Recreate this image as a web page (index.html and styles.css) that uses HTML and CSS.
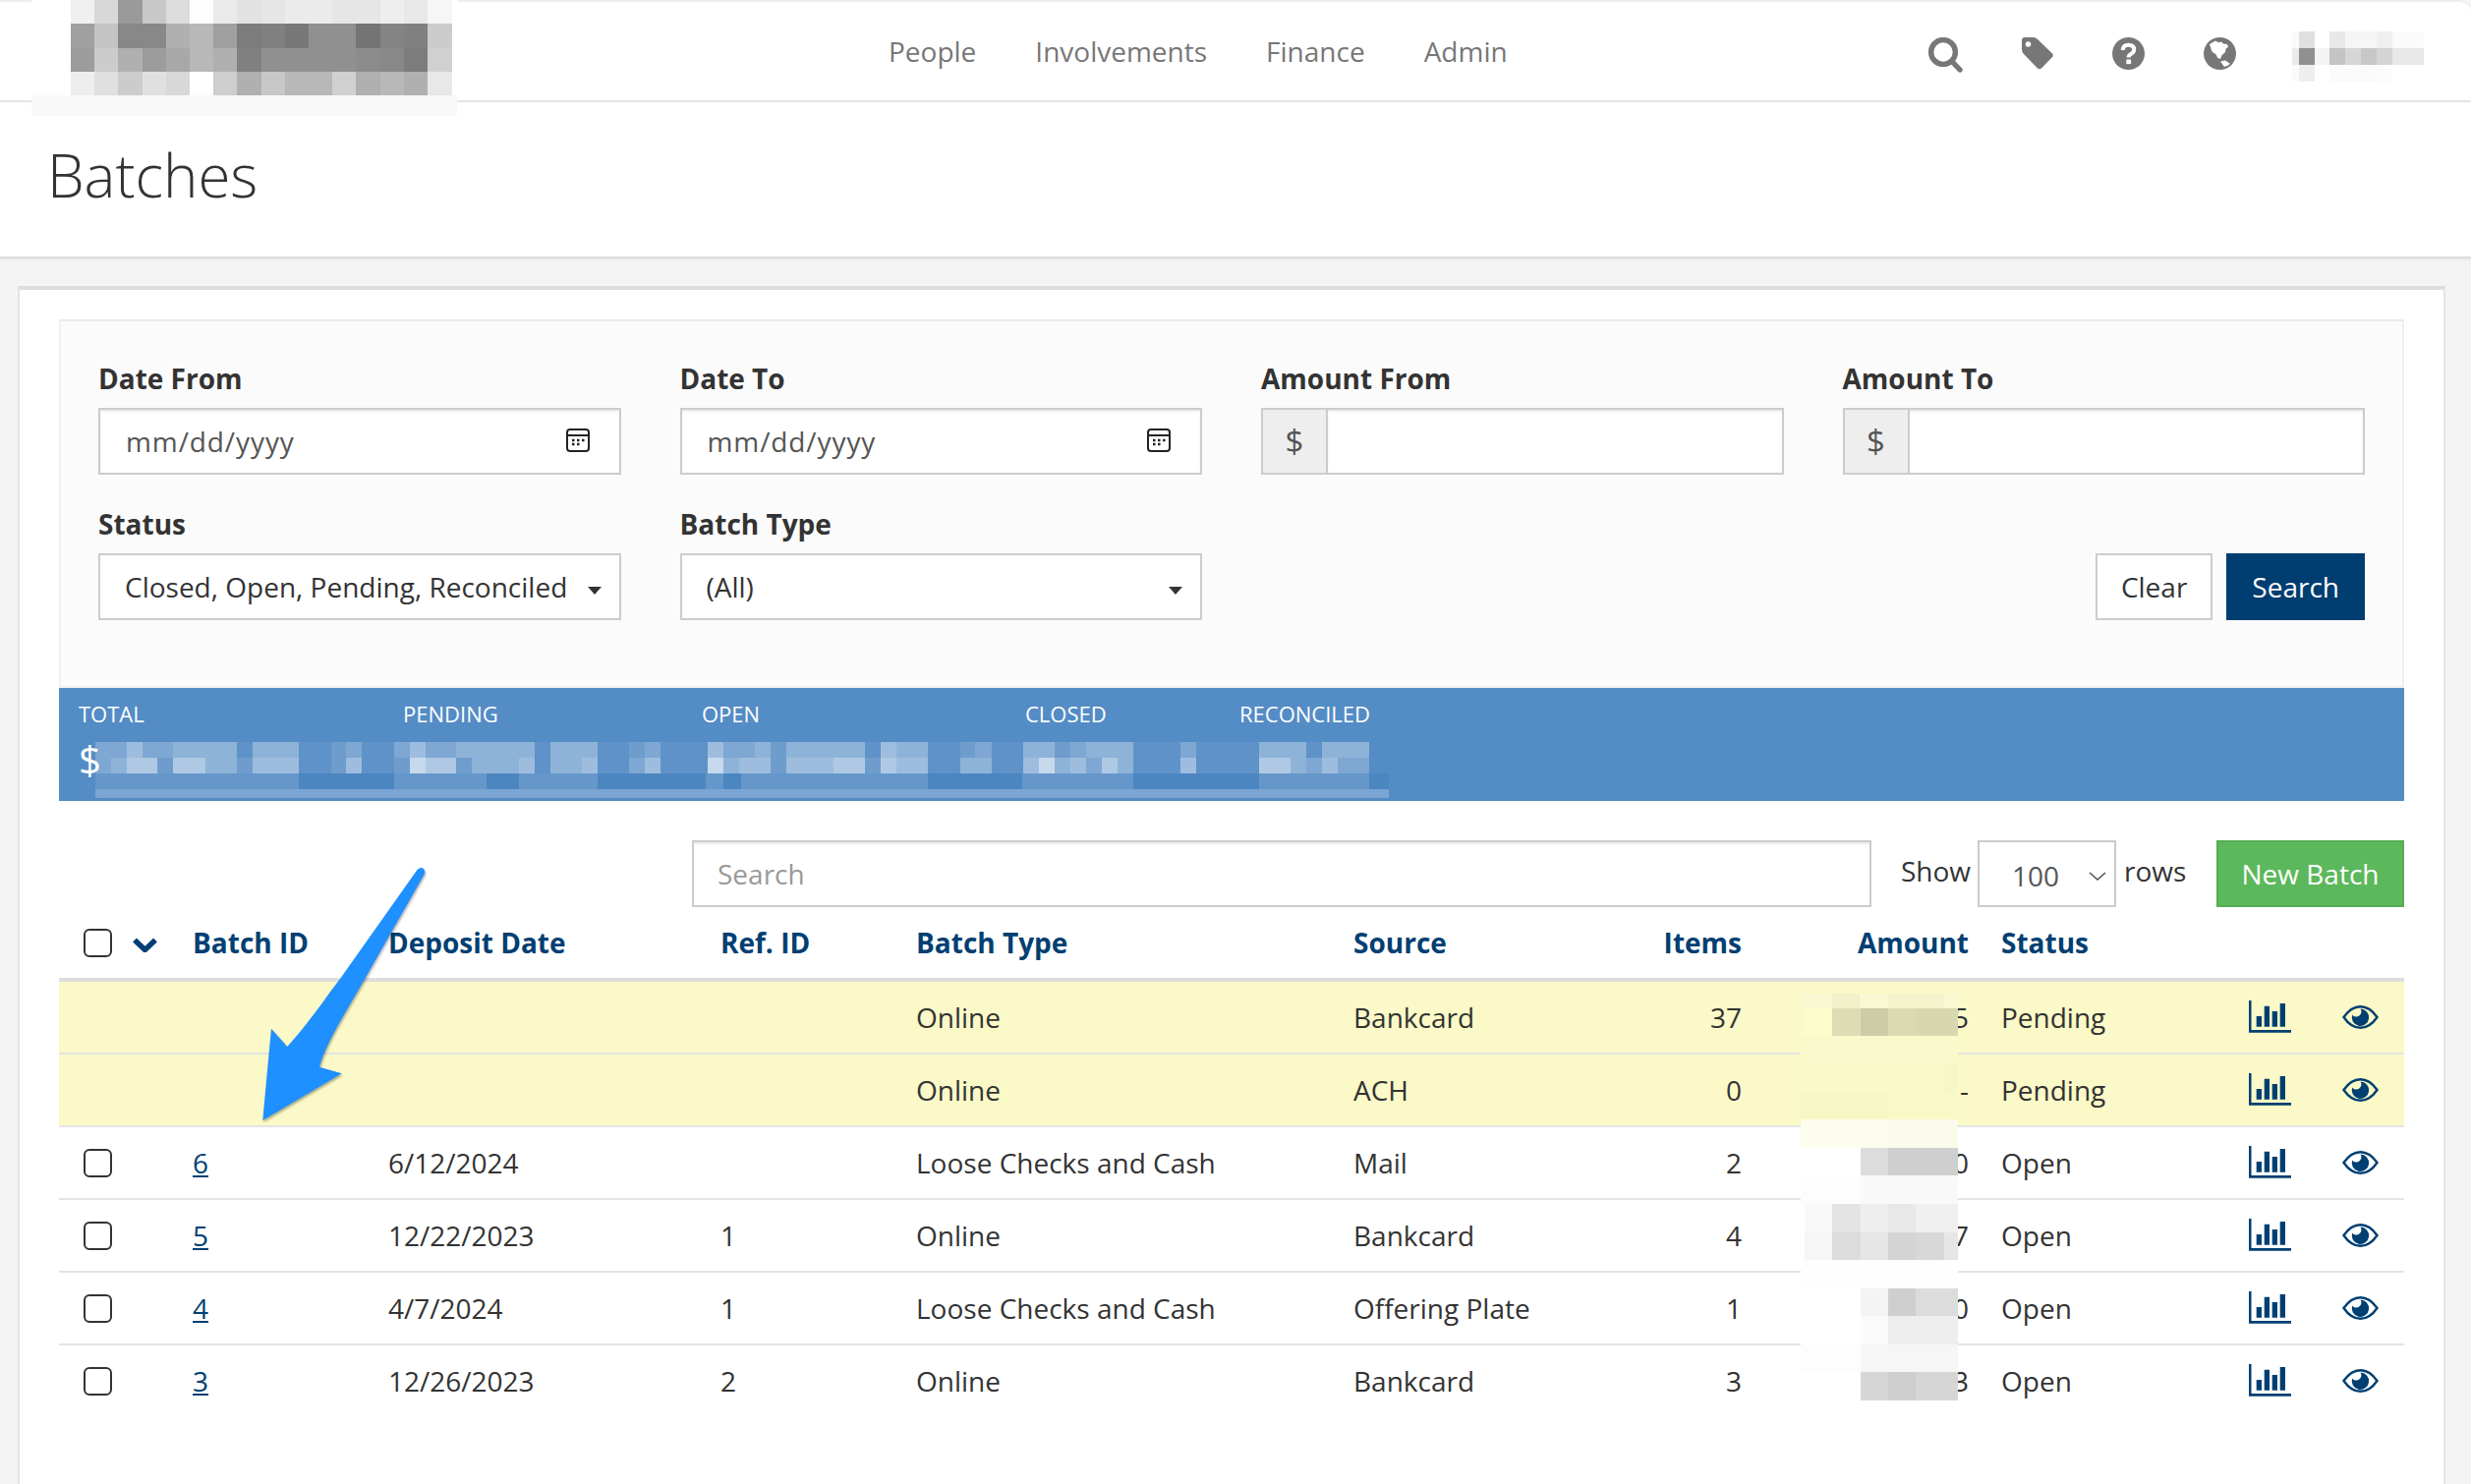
FILE: index.html
```html
<!DOCTYPE html>
<html lang="en">
<head>
<meta charset="utf-8">
<title>Batches</title>
<link rel="stylesheet" href="styles.css">
</head>
<body>
<svg class="arrow" viewBox="0 0 240 300" aria-hidden="true"><path d="M184.5 25Q186 23 189 23Q193 24 192 29L131.7 135C112 170 92 200 85 225.7L107.7 232.3L27.3 280L36 186.7L52.3 205C75 180 95 150 106.7 135Z"/></svg>

<header class="topbar">
  <svg class="logo-mosaic" viewBox="32 0 433 118" shape-rendering="crispEdges" aria-hidden="true">
    <rect x="32" y="0" width="433" height="118" fill="#fff"/>
    <rect x="32" y="97" width="433" height="21" fill="#f9f9f9"/>
    <g fill="#f0f0f0"><rect x="72" y="0" width="24.2" height="24"/></g>
    <rect x="96" y="0" width="24" height="24" fill="#d8d8d8"/><rect x="120" y="0" width="25" height="24" fill="#9a9a9a"/><rect x="145" y="0" width="24" height="24" fill="#c8c8c8"/><rect x="169" y="0" width="24" height="24" fill="#dcdcdc"/><rect x="193" y="0" width="24" height="24" fill="#fdfdfd"/><rect x="217" y="0" width="24" height="24" fill="#eaeaea"/><rect x="241" y="0" width="25" height="24" fill="#e2e2e2"/><rect x="266" y="0" width="24" height="24" fill="#e6e6e6"/><rect x="290" y="0" width="48" height="24" fill="#ebebeb"/><rect x="338" y="0" width="49" height="24" fill="#e6e6e6"/><rect x="387" y="0" width="24" height="24" fill="#eeeeee"/><rect x="411" y="0" width="24" height="24" fill="#e8e8e8"/><rect x="435" y="0" width="25" height="24" fill="#f6f6f6"/>
    <rect x="72" y="24" width="24" height="25" fill="#a0a0a0"/><rect x="96" y="24" width="24" height="25" fill="#c4c4c4"/><rect x="120" y="24" width="49" height="25" fill="#888"/><rect x="169" y="24" width="24" height="25" fill="#b0b0b0"/><rect x="193" y="24" width="24" height="25" fill="#b8b8b8"/><rect x="217" y="24" width="24" height="25" fill="#a0a0a0"/><rect x="241" y="24" width="25" height="25" fill="#7c7c7c"/><rect x="266" y="24" width="24" height="25" fill="#808080"/><rect x="290" y="24" width="24" height="25" fill="#787878"/><rect x="314" y="24" width="48" height="25" fill="#909090"/><rect x="362" y="24" width="25" height="25" fill="#747474"/><rect x="387" y="24" width="24" height="25" fill="#848484"/><rect x="411" y="24" width="24" height="25" fill="#808080"/><rect x="435" y="24" width="25" height="25" fill="#cccccc"/>
    <rect x="72" y="49" width="24" height="24" fill="#9c9c9c"/><rect x="96" y="49" width="24" height="24" fill="#cccccc"/><rect x="120" y="49" width="25" height="24" fill="#b0b0b0"/><rect x="145" y="49" width="24" height="24" fill="#9c9c9c"/><rect x="169" y="49" width="24" height="24" fill="#a8a8a8"/><rect x="193" y="49" width="24" height="24" fill="#b8b8b8"/><rect x="217" y="49" width="24" height="24" fill="#b0b0b0"/><rect x="241" y="49" width="25" height="24" fill="#808080"/><rect x="266" y="49" width="96" height="24" fill="#909090"/><rect x="362" y="49" width="25" height="24" fill="#8c8c8c"/><rect x="387" y="49" width="24" height="24" fill="#888"/><rect x="411" y="49" width="24" height="24" fill="#7c7c7c"/><rect x="435" y="49" width="25" height="24" fill="#d0d0d0"/>
    <rect x="72" y="73" width="24" height="24" fill="#eeeeee"/><rect x="96" y="73" width="24" height="24" fill="#e0e0e0"/><rect x="120" y="73" width="25" height="24" fill="#cccccc"/><rect x="145" y="73" width="24" height="24" fill="#e0e0e0"/><rect x="169" y="73" width="24" height="24" fill="#d8d8d8"/><rect x="217" y="73" width="24" height="24" fill="#cecece"/><rect x="241" y="73" width="25" height="24" fill="#b0b0b0"/><rect x="266" y="73" width="24" height="24" fill="#c8c8c8"/><rect x="290" y="73" width="48" height="24" fill="#b8b8b8"/><rect x="338" y="73" width="24" height="24" fill="#d0d0d0"/><rect x="362" y="73" width="25" height="24" fill="#b0b0b0"/><rect x="387" y="73" width="24" height="24" fill="#b8b8b8"/><rect x="411" y="73" width="24" height="24" fill="#b0b0b0"/><rect x="435" y="73" width="25" height="24" fill="#e8e8e8"/>
  </svg>
  <nav class="mainnav">
    <a href="#">People</a>
    <a href="#">Involvements</a>
    <a href="#">Finance</a>
    <a href="#">Admin</a>
  </nav>
  <div class="tools">
    <svg class="ico ico-search" viewBox="0 0 35 36" aria-hidden="true"><circle cx="15" cy="15" r="12.4"/><path d="M24 24.5L32 33"/></svg>
    <svg class="ico ico-tag" viewBox="0 0 32 33" aria-hidden="true"><path fill-rule="evenodd" d="M3 0H12Q14 0 16 2L31 16.5Q32.5 18 31 20L20 31.5Q18 33 16 31.5L2 17Q0 15 0 12V3Q0 0 3 0ZM6.5 4.2a2.8 2.8 0 1 0 .01 0Z"/></svg>
    <svg class="ico ico-help" viewBox="0 0 33 33" aria-hidden="true"><circle cx="16.5" cy="16.5" r="16.5"/><path class="mark" d="M10.8 13Q11 7.8 16.5 7.8Q22.2 7.8 22.2 12.6Q22.2 15.2 19 17Q16.6 18.2 16.6 20.5"/><rect class="dot" x="14.3" y="22.5" width="4.8" height="4.6"/></svg>
    <svg class="ico ico-globe" viewBox="0 0 33 33" aria-hidden="true"><circle cx="16.5" cy="16.5" r="16.5"/><path class="land" d="M6 7L12 3.6L15 5.2L18 4.4L20 6.5L24 7L25 10L22.6 11.6L22 15L18.4 18.6L17 22L14.4 21L12.6 17.6L8.5 14.5ZM17 24.4L22 23.6L26.6 26.4L26 28L21 30Z"/></svg>
    <svg class="user-mosaic" viewBox="0 0 134 51" shape-rendering="crispEdges" aria-hidden="true">
      <rect x="0" y="0" width="7" height="17" fill="#fafafa"/><rect x="7" y="0" width="16" height="17" fill="#e0e0e0"/><rect x="38" y="0" width="16" height="17" fill="#e8e8e8"/><rect x="54" y="0" width="32" height="17" fill="#f6f6f6"/><rect x="86" y="0" width="16" height="17" fill="#f0f0f0"/><rect x="102" y="0" width="32" height="17" fill="#fbfbfb"/>
      <rect x="0" y="17" width="7" height="17" fill="#eaeaea"/><rect x="7" y="17" width="16" height="17" fill="#909090"/><rect x="23" y="17" width="15" height="17" fill="#f4f4f4"/><rect x="38" y="17" width="16" height="17" fill="#c4c4c4"/><rect x="54" y="17" width="16" height="17" fill="#d6d6d6"/><rect x="70" y="17" width="16" height="17" fill="#c8c8c8"/><rect x="86" y="17" width="16" height="17" fill="#d4d4d4"/><rect x="102" y="17" width="32" height="17" fill="#e8e8e8"/>
      <rect x="0" y="34" width="7" height="17" fill="#fafafa"/><rect x="7" y="34" width="16" height="17" fill="#eeeeee"/><rect x="38" y="34" width="48" height="17" fill="#fbfbfb"/><rect x="86" y="34" width="16" height="17" fill="#fcfcfc"/>
    </svg>
  </div>
</header>

<section class="titlebar">
  <h1>Batches</h1>
</section>

<main class="workspace">
  <div class="card">
    <form class="filters">
      <div class="field">
        <label>Date From</label>
        <div class="control date"><span>mm/dd/yyyy</span>
          <svg class="cal" viewBox="0 0 24 24" aria-hidden="true"><rect x="1" y="1" width="22" height="22" rx="3"/><path d="M1 7H23"/><path class="pips" d="M6 12h2.5M11 12h2.5M16 12h2.5M6 16h2.5M11 16h2.5"/></svg>
        </div>
      </div>
      <div class="field">
        <label>Date To</label>
        <div class="control date"><span>mm/dd/yyyy</span>
          <svg class="cal" viewBox="0 0 24 24" aria-hidden="true"><rect x="1" y="1" width="22" height="22" rx="3"/><path d="M1 7H23"/><path class="pips" d="M6 12h2.5M11 12h2.5M16 12h2.5M6 16h2.5M11 16h2.5"/></svg>
        </div>
      </div>
      <div class="field">
        <label>Amount From</label>
        <div class="control money"><span class="addon">$</span><span class="blank"></span></div>
      </div>
      <div class="field">
        <label>Amount To</label>
        <div class="control money"><span class="addon">$</span><span class="blank"></span></div>
      </div>
      <div class="field">
        <label>Status</label>
        <div class="control pick"><span>Closed, Open, Pending, Reconciled</span><i class="caret"></i></div>
      </div>
      <div class="field">
        <label>Batch Type</label>
        <div class="control pick"><span>(All)</span><i class="caret"></i></div>
      </div>
      <div class="actions">
        <button type="button" class="btn btn-plain">Clear</button>
        <button type="button" class="btn btn-navy">Search</button>
      </div>
    </form>

    <section class="stats">
      <div class="stat"><span class="stat-label">TOTAL</span><span class="stat-value">$</span></div>
      <div class="stat"><span class="stat-label">PENDING</span></div>
      <div class="stat"><span class="stat-label">OPEN</span></div>
      <div class="stat"><span class="stat-label">CLOSED</span></div>
      <div class="stat"><span class="stat-label">RECONCILED</span></div>
      <svg class="stats-mosaic" viewBox="0 0 1320 62" shape-rendering="crispEdges" aria-hidden="true">
        <g transform="translate(-57.2 0) scale(.893 1)">
          <rect class="w0" x="64" y="3" width="1451" height="32"/>
          <g class="ra">
            <rect class="w2" x="64" y="3" width="36" height="16"/><rect class="w4" x="100" y="3" width="18" height="16"/><rect class="w2" x="118" y="3" width="35" height="16"/><rect class="w3" x="153" y="3" width="36" height="16"/><rect class="w3" x="189" y="3" width="36" height="16"/><rect class="w3" x="243" y="3" width="53" height="16"/><rect class="w1" x="333" y="3" width="17" height="16"/><rect class="w2" x="350" y="3" width="18" height="16"/><rect class="w2" x="404" y="3" width="18" height="16"/><rect class="w4" x="422" y="3" width="18" height="16"/><rect class="w2" x="440" y="3" width="35" height="16"/><rect class="w3" x="475" y="3" width="90" height="16"/><rect class="w3" x="583" y="3" width="53" height="16"/><rect class="w1" x="672" y="3" width="18" height="16"/><rect class="w2" x="690" y="3" width="18" height="16"/><rect class="w4" x="762" y="3" width="18" height="16"/><rect class="w2" x="780" y="3" width="35" height="16"/><rect class="w3" x="815" y="3" width="18" height="16"/><rect class="w1" x="833" y="3" width="18" height="16"/><rect class="w3" x="851" y="3" width="90" height="16"/><rect class="w4" x="959" y="3" width="18" height="16"/><rect class="w3" x="977" y="3" width="36" height="16"/><rect class="w1" x="1049" y="3" width="17" height="16"/><rect class="w2" x="1066" y="3" width="19" height="16"/><rect class="w3" x="1121" y="3" width="36" height="16"/><rect class="w1" x="1157" y="3" width="18" height="16"/><rect class="w2" x="1175" y="3" width="18" height="16"/><rect class="w3" x="1193" y="3" width="54" height="16"/><rect class="w2" x="1300" y="3" width="18" height="16"/><rect class="w3" x="1390" y="3" width="54" height="16"/><rect class="w3" x="1462" y="3" width="53" height="16"/>
          </g>
          <g class="rb">
            <rect class="w2" x="64" y="19" width="18" height="16"/><rect class="w3" x="82" y="19" width="18" height="16"/><rect class="w5" x="100" y="19" width="35" height="16"/><rect class="w1" x="135" y="19" width="18" height="16"/><rect class="w5" x="153" y="19" width="36" height="16"/><rect class="w3" x="189" y="19" width="36" height="16"/><rect class="w1" x="225" y="19" width="18" height="16"/><rect class="w4" x="243" y="19" width="53" height="16"/><rect class="w1" x="333" y="19" width="17" height="16"/><rect class="w4" x="350" y="19" width="18" height="16"/><rect class="w1" x="404" y="19" width="18" height="16"/><rect class="w6" x="422" y="19" width="18" height="16"/><rect class="w5" x="440" y="19" width="35" height="16"/><rect class="w1" x="475" y="19" width="18" height="16"/><rect class="w3" x="493" y="19" width="54" height="16"/><rect class="w4" x="547" y="19" width="18" height="16"/><rect class="w3" x="583" y="19" width="35" height="16"/><rect class="w4" x="618" y="19" width="18" height="16"/><rect class="w2" x="672" y="19" width="18" height="16"/><rect class="w4" x="690" y="19" width="18" height="16"/><rect class="w6" x="762" y="19" width="18" height="16"/><rect class="w3" x="780" y="19" width="17" height="16"/><rect class="w4" x="797" y="19" width="36" height="16"/><rect class="w1" x="833" y="19" width="18" height="16"/><rect class="w4" x="851" y="19" width="54" height="16"/><rect class="w5" x="905" y="19" width="36" height="16"/><rect class="w1" x="941" y="19" width="18" height="16"/><rect class="w5" x="959" y="19" width="18" height="16"/><rect class="w4" x="977" y="19" width="36" height="16"/><rect class="w3" x="1049" y="19" width="36" height="16"/><rect class="w4" x="1121" y="19" width="18" height="16"/><rect class="w6" x="1139" y="19" width="18" height="16"/><rect class="w3" x="1157" y="19" width="18" height="16"/><rect class="w4" x="1175" y="19" width="18" height="16"/><rect class="w2" x="1193" y="19" width="18" height="16"/><rect class="w5" x="1211" y="19" width="18" height="16"/><rect class="w3" x="1229" y="19" width="18" height="16"/><rect class="w4" x="1300" y="19" width="18" height="16"/><rect class="w5" x="1390" y="19" width="36" height="16"/><rect class="w3" x="1426" y="19" width="18" height="16"/><rect class="w2" x="1444" y="19" width="18" height="16"/><rect class="w4" x="1462" y="19" width="18" height="16"/><rect class="w2" x="1480" y="19" width="35" height="16"/>
          </g>
          <g class="rc">
            <rect class="w1" x="64" y="35" width="232" height="16"/><rect class="dk" x="296" y="35" width="108" height="16"/><rect class="w1" x="404" y="35" width="106" height="16"/><rect class="dk" x="510" y="35" width="37" height="16"/><rect class="w1" x="547" y="35" width="89" height="16"/><rect class="dk" x="636" y="35" width="124" height="16"/><rect class="w1" x="760" y="35" width="20" height="16"/><rect class="dk" x="780" y="35" width="20" height="16"/><rect class="w1" x="800" y="35" width="213" height="16"/><rect class="dk" x="1013" y="35" width="107" height="16"/><rect class="w1" x="1120" y="35" width="127" height="16"/><rect class="dk" x="1247" y="35" width="143" height="16"/><rect class="w1" x="1390" y="35" width="125" height="16"/><rect class="dk" x="1515" y="35" width="23" height="16"/>
          </g>
          <rect class="strip" x="64" y="51" width="1474" height="9"/>
        </g>
      </svg>
    </section>

    <div class="toolbar">
      <input class="search" type="text" placeholder="Search">
      <span class="show-label">Show</span>
      <div class="rowpick"><span>100</span><svg viewBox="0 0 18 9" aria-hidden="true"><path d="M1 1L9 8L17 1"/></svg></div>
      <span class="rows-label">rows</span>
      <button type="button" class="btn btn-green">New Batch</button>
    </div>

    <div class="table-wrap">
      <table class="batches">
        <colgroup>
          <col class="c-sel"><col class="c-id"><col class="c-date"><col class="c-ref"><col class="c-type"><col class="c-src"><col class="c-items"><col class="c-amt"><col class="c-status"><col class="c-chart"><col class="c-eye">
        </colgroup>
        <thead>
          <tr>
            <th><div class="sel"><i class="check"></i><svg class="chev" viewBox="0 0 25 15" aria-hidden="true"><path d="M2 2.5L12.5 12.5L23 2.5"/></svg></div></th>
            <th>Batch ID</th>
            <th>Deposit Date</th>
            <th>Ref. ID</th>
            <th>Batch Type</th>
            <th>Source</th>
            <th class="num">Items</th>
            <th class="num">Amount</th>
            <th class="st">Status</th>
            <th></th>
            <th></th>
          </tr>
        </thead>
        <tbody>
          <tr class="pending">
            <td></td><td></td><td></td><td></td><td>Online</td><td>Bankcard</td><td class="num">37</td><td class="num">5</td><td class="st">Pending</td>
            <td><svg class="chart" viewBox="0 0 43 33" aria-hidden="true"><path d="M0 0h2.5v30H43v2.7H0zM7.7 16h5.3v10.7H7.7zM15.7 5.7H21v21h-5.3zM23.7 11H29v15.7h-5.3zM31.7 3H37v23.7h-5.3z"/></svg></td>
            <td><svg class="eye" viewBox="0 0 37 24" aria-hidden="true"><path class="lid" d="M1.5 12C7 4 12.5 1.2 18.5 1.2S30 4 35.5 12C30 20 24.5 22.8 18.5 22.8S7 20 1.5 12Z"/><path class="iris" d="M18.5 3.5A8.7 8.7 0 1 1 10.2 9.4A5 5 0 0 0 18.5 3.5Z"/></svg></td>
          </tr>
          <tr class="pending">
            <td></td><td></td><td></td><td></td><td>Online</td><td>ACH</td><td class="num">0</td><td class="num">-</td><td class="st">Pending</td>
            <td><svg class="chart" viewBox="0 0 43 33" aria-hidden="true"><path d="M0 0h2.5v30H43v2.7H0zM7.7 16h5.3v10.7H7.7zM15.7 5.7H21v21h-5.3zM23.7 11H29v15.7h-5.3zM31.7 3H37v23.7h-5.3z"/></svg></td>
            <td><svg class="eye" viewBox="0 0 37 24" aria-hidden="true"><path class="lid" d="M1.5 12C7 4 12.5 1.2 18.5 1.2S30 4 35.5 12C30 20 24.5 22.8 18.5 22.8S7 20 1.5 12Z"/><path class="iris" d="M18.5 3.5A8.7 8.7 0 1 1 10.2 9.4A5 5 0 0 0 18.5 3.5Z"/></svg></td>
          </tr>
          <tr>
            <td><div class="sel"><i class="check"></i></div></td><td><a href="#">6</a></td><td>6/12/2024</td><td></td><td>Loose Checks and Cash</td><td>Mail</td><td class="num">2</td><td class="num">0</td><td class="st">Open</td>
            <td><svg class="chart" viewBox="0 0 43 33" aria-hidden="true"><path d="M0 0h2.5v30H43v2.7H0zM7.7 16h5.3v10.7H7.7zM15.7 5.7H21v21h-5.3zM23.7 11H29v15.7h-5.3zM31.7 3H37v23.7h-5.3z"/></svg></td>
            <td><svg class="eye" viewBox="0 0 37 24" aria-hidden="true"><path class="lid" d="M1.5 12C7 4 12.5 1.2 18.5 1.2S30 4 35.5 12C30 20 24.5 22.8 18.5 22.8S7 20 1.5 12Z"/><path class="iris" d="M18.5 3.5A8.7 8.7 0 1 1 10.2 9.4A5 5 0 0 0 18.5 3.5Z"/></svg></td>
          </tr>
          <tr>
            <td><div class="sel"><i class="check"></i></div></td><td><a href="#">5</a></td><td>12/22/2023</td><td>1</td><td>Online</td><td>Bankcard</td><td class="num">4</td><td class="num">7</td><td class="st">Open</td>
            <td><svg class="chart" viewBox="0 0 43 33" aria-hidden="true"><path d="M0 0h2.5v30H43v2.7H0zM7.7 16h5.3v10.7H7.7zM15.7 5.7H21v21h-5.3zM23.7 11H29v15.7h-5.3zM31.7 3H37v23.7h-5.3z"/></svg></td>
            <td><svg class="eye" viewBox="0 0 37 24" aria-hidden="true"><path class="lid" d="M1.5 12C7 4 12.5 1.2 18.5 1.2S30 4 35.5 12C30 20 24.5 22.8 18.5 22.8S7 20 1.5 12Z"/><path class="iris" d="M18.5 3.5A8.7 8.7 0 1 1 10.2 9.4A5 5 0 0 0 18.5 3.5Z"/></svg></td>
          </tr>
          <tr>
            <td><div class="sel"><i class="check"></i></div></td><td><a href="#">4</a></td><td>4/7/2024</td><td>1</td><td>Loose Checks and Cash</td><td>Offering Plate</td><td class="num">1</td><td class="num">0</td><td class="st">Open</td>
            <td><svg class="chart" viewBox="0 0 43 33" aria-hidden="true"><path d="M0 0h2.5v30H43v2.7H0zM7.7 16h5.3v10.7H7.7zM15.7 5.7H21v21h-5.3zM23.7 11H29v15.7h-5.3zM31.7 3H37v23.7h-5.3z"/></svg></td>
            <td><svg class="eye" viewBox="0 0 37 24" aria-hidden="true"><path class="lid" d="M1.5 12C7 4 12.5 1.2 18.5 1.2S30 4 35.5 12C30 20 24.5 22.8 18.5 22.8S7 20 1.5 12Z"/><path class="iris" d="M18.5 3.5A8.7 8.7 0 1 1 10.2 9.4A5 5 0 0 0 18.5 3.5Z"/></svg></td>
          </tr>
          <tr>
            <td><div class="sel"><i class="check"></i></div></td><td><a href="#">3</a></td><td>12/26/2023</td><td>2</td><td>Online</td><td>Bankcard</td><td class="num">3</td><td class="num">3</td><td class="st">Open</td>
            <td><svg class="chart" viewBox="0 0 43 33" aria-hidden="true"><path d="M0 0h2.5v30H43v2.7H0zM7.7 16h5.3v10.7H7.7zM15.7 5.7H21v21h-5.3zM23.7 11H29v15.7h-5.3zM31.7 3H37v23.7h-5.3z"/></svg></td>
            <td><svg class="eye" viewBox="0 0 37 24" aria-hidden="true"><path class="lid" d="M1.5 12C7 4 12.5 1.2 18.5 1.2S30 4 35.5 12C30 20 24.5 22.8 18.5 22.8S7 20 1.5 12Z"/><path class="iris" d="M18.5 3.5A8.7 8.7 0 1 1 10.2 9.4A5 5 0 0 0 18.5 3.5Z"/></svg></td>
          </tr>
        </tbody>
      </table>
      <svg class="amount-mosaic" viewBox="1832 1011 160 414" shape-rendering="crispEdges" aria-hidden="true">
        <rect x="1832" y="1011" width="160" height="15" fill="#f8f8d2"/><rect x="1864" y="1011" width="28" height="15" fill="#f0f1c8"/><rect x="1921" y="1011" width="57" height="15" fill="#f4f4cc"/>
        <rect x="1832" y="1026" width="160" height="28" fill="#fbfac9"/><rect x="1836" y="1026" width="28" height="28" fill="#fdfdcc"/><rect x="1864" y="1026" width="29" height="28" fill="#dcddb4"/><rect x="1893" y="1026" width="28" height="28" fill="#cccca8"/><rect x="1921" y="1026" width="28" height="28" fill="#dadbb2"/><rect x="1949" y="1026" width="43" height="28" fill="#d7d8b0"/>
        <rect x="1832" y="1054" width="160" height="28" fill="#f9f9cb"/>
        <rect x="1832" y="1082" width="160" height="29" fill="#fafac8"/><rect x="1978" y="1082" width="14" height="29" fill="#f6f6c6"/>
        <rect x="1832" y="1111" width="89" height="28" fill="#f7f7c6"/><rect x="1921" y="1111" width="71" height="28" fill="#f9f9c8"/>
        <rect x="1832" y="1139" width="160" height="29" fill="#fdfdee"/><rect x="1921" y="1139" width="71" height="29" fill="#fbfbec"/>
        <rect x="1832" y="1168" width="160" height="28" fill="#fff"/><rect x="1893" y="1168" width="28" height="28" fill="#dcdcdc"/><rect x="1921" y="1168" width="71" height="28" fill="#cfcfcf"/>
        <rect x="1832" y="1196" width="160" height="29" fill="#fdfdfd"/><rect x="1893" y="1196" width="99" height="29" fill="#f9f9f9"/>
        <rect x="1832" y="1225" width="160" height="29" fill="#fff"/><rect x="1836" y="1225" width="28" height="29" fill="#f9f9f9"/><rect x="1864" y="1225" width="29" height="29" fill="#e4e4e4"/><rect x="1893" y="1225" width="28" height="29" fill="#eeeeee"/><rect x="1921" y="1225" width="28" height="29" fill="#e8e8e8"/><rect x="1949" y="1225" width="43" height="29" fill="#f0f0f0"/>
        <rect x="1832" y="1254" width="160" height="28" fill="#fff"/><rect x="1836" y="1254" width="28" height="28" fill="#f6f6f6"/><rect x="1864" y="1254" width="29" height="28" fill="#dcdcdc"/><rect x="1893" y="1254" width="28" height="28" fill="#e6e6e6"/><rect x="1921" y="1254" width="28" height="28" fill="#d4d4d4"/><rect x="1949" y="1254" width="29" height="28" fill="#d8d8d8"/><rect x="1978" y="1254" width="14" height="28" fill="#e6e6e6"/>
        <rect x="1832" y="1282" width="160" height="29" fill="#fefefe"/>
        <rect x="1832" y="1311" width="160" height="28" fill="#fff"/><rect x="1893" y="1311" width="28" height="28" fill="#f4f4f4"/><rect x="1921" y="1311" width="28" height="28" fill="#cfcfcf"/><rect x="1949" y="1311" width="43" height="28" fill="#dcdcdc"/>
        <rect x="1832" y="1339" width="160" height="29" fill="#fff"/><rect x="1893" y="1339" width="28" height="29" fill="#fbfbfb"/><rect x="1921" y="1339" width="71" height="29" fill="#eeeeee"/>
        <rect x="1832" y="1368" width="160" height="28" fill="#fdfdfd"/><rect x="1893" y="1368" width="99" height="28" fill="#f6f6f6"/>
        <rect x="1832" y="1396" width="160" height="29" fill="#fff"/><rect x="1893" y="1396" width="99" height="29" fill="#d6d6d6"/><rect x="1921" y="1396" width="28" height="29" fill="#cfcfcf"/>
      </svg>
    </div>
  </div>
</main>
</body>
</html>
```

FILE: styles.css
```css
* { box-sizing: border-box; }
html, body { margin: 0; padding: 0; }
body {
  position: relative;
  width: 2514px;
  height: 1510px;
  overflow: hidden;
  display: flex;
  flex-direction: column;
  background: #f4f4f4;
  font-family: "Open Sans", "Noto Sans", sans-serif;
  font-size: 28px;
  line-height: 40px;
  color: #333;
}

/* annotation arrow */
.arrow {
  position: absolute;
  left: 240px;
  top: 860px;
  width: 240px;
  height: 300px;
  z-index: 5;
  fill: #1e90ff;
  filter: drop-shadow(1px 2px 1px rgba(0, 0, 0, .3));
}

/* top bar */
.topbar {
  position: relative;
  flex: none;
  height: 104px;
  display: flex;
  background: #fff;
  border-top: 2px solid #eee;
  border-bottom: 2px solid #e4e4e4;
  border-top-right-radius: 12px;
}
.logo-mosaic {
  position: absolute;
  left: 32px;
  top: -2px;
  width: 433px;
  height: 118px;
  z-index: 3;
}
.mainnav {
  display: flex;
  gap: 60px;
  align-items: center;
  margin-left: 904px;
  height: 100px;
}
.mainnav a { color: #777; text-decoration: none; }
.tools {
  display: flex;
  align-items: flex-start;
  gap: 60px;
  margin-left: auto;
  padding: 30px 48px 0 0;
}
.ico { display: block; margin-top: 6px; fill: #777; }
.ico-search { width: 35px; height: 36px; fill: none; stroke: #777; stroke-width: 5.4; stroke-linecap: round; }
.ico-tag { width: 32px; height: 33px; }
.ico-help { width: 33px; height: 33px; }
.ico-help .mark { fill: none; stroke: #fff; stroke-width: 4; }
.ico-help .dot { fill: #fff; }
.ico-globe { width: 33px; height: 33px; }
.ico-globe .land { fill: #fff; }
.user-mosaic { display: block; width: 134px; height: 51px; margin-left: -3px; }

/* page title */
.titlebar {
  flex: none;
  height: 159px;
  background: #fff;
  border-bottom: 2px solid #ddd;
  box-shadow: 0 1px 2px rgba(0, 0, 0, .08);
  padding-left: 48px;
}
.titlebar h1 {
  margin: 0;
  padding-top: 34px;
  font-size: 60px;
  line-height: 80px;
  font-weight: 300;
  color: #333;
}

/* card */
.workspace { flex: 1; padding: 28px 26px 0 18px; min-height: 0; }
.card {
  height: 100%;
  background: #fff;
  border: 2px solid #e4e4e4;
  border-top: 4px solid #ddd;
  border-bottom: 0;
  padding: 30px 40px 0;
}

/* filter form */
.filters {
  display: grid;
  grid-template-columns: repeat(4, 1fr);
  column-gap: 60px;
  row-gap: 30px;
  height: 375px;
  padding: 38px 38px 0;
  background: #fbfbfb;
  border: 2px solid #f0f0f0;
  border-top-color: #e9e9e9;
  grid-auto-rows: max-content;
}
.field label { display: block; font-weight: 700; margin-bottom: 10px; }
.control {
  height: 68px;
  display: flex;
  align-items: center;
  background: #fff;
  border: 2px solid #ccc;
}
.date {
  justify-content: space-between;
  padding: 0 30px 0 26px;
  color: #555;
  letter-spacing: .9px;
  box-shadow: inset 0 2px 2px rgba(0, 0, 0, .075);
}
.cal { width: 24px; height: 24px; margin-top: -2px; fill: none; stroke: #222; stroke-width: 2; }
.cal .pips { stroke-width: 2.4; }
.money { align-items: stretch; }
.addon {
  flex: none;
  width: 66px;
  display: flex;
  align-items: center;
  justify-content: center;
  background: #eee;
  border-right: 2px solid #ccc;
  color: #555;
  font-size: 33px;
}
.blank { flex: 1; box-shadow: inset 0 2px 2px rgba(0, 0, 0, .075); }
.pick { justify-content: space-between; padding: 0 18px 0 25px; color: #333; }
.caret {
  width: 0;
  height: 0;
  margin-top: 8px;
  border-top: 8px solid #333;
  border-left: 7px solid transparent;
  border-right: 7px solid transparent;
}
.actions {
  grid-column: 3 / 5;
  display: flex;
  justify-content: flex-end;
  align-items: flex-end;
  gap: 14px;
}
.btn {
  height: 68px;
  padding: 0 24px;
  font: inherit;
  border: 2px solid transparent;
  border-radius: 0;
}
.btn-plain { background: #fff; border-color: #ccc; color: #333; }
.btn-navy { background: #003d71; border-color: #003d71; color: #fff; }
.btn-green {
  width: 191px;
  padding: 0;
  margin-left: auto;
  background: #5cb85c;
  border-color: #55ae55;
  color: #fff;
}

/* totals band */
.stats {
  position: relative;
  display: grid;
  grid-template-columns: 330px 304px 329px 218px auto;
  height: 115px;
  padding: 11px 0 0 20px;
  background: #548cc5;
  color: #fff;
}
.stat-label { display: block; font-size: 22px; line-height: 30px; }
.stat-value { display: block; font-size: 40px; line-height: 44px; margin-top: 10px; }
.stats-mosaic { position: absolute; left: 37px; top: 52px; width: 1320px; height: 62px; }
.w0 { fill: #fff; opacity: .06; }
.w1 { fill: #fff; opacity: .1; }
.w2 { fill: #fff; opacity: .2; }
.w3 { fill: #fff; opacity: .3; }
.w4 { fill: #fff; opacity: .4; }
.w5 { fill: #fff; opacity: .5; }
.w6 { fill: #fff; opacity: .65; }
.dk { fill: #2f6fb5; opacity: .2; }
.strip { fill: #7ba5d3; }

/* table toolbar */
.toolbar {
  display: flex;
  align-items: center;
  height: 68px;
  margin-top: 40px;
}
.search {
  width: 1200px;
  height: 68px;
  margin-left: 644px;
  padding: 0 24px;
  font: inherit;
  color: #555;
  background: #fff;
  border: 2px solid #ccc;
  border-radius: 0;
  box-shadow: inset 0 2px 2px rgba(0, 0, 0, .075);
  outline: none;
}
.search::placeholder { color: #999; opacity: 1; }
.show-label { margin-left: 30px; width: 78px; margin-bottom: 6px; }
.rowpick {
  width: 141px;
  height: 68px;
  display: flex;
  align-items: center;
  justify-content: space-between;
  padding: 4px 8px 0 33px;
  background: #fff;
  border: 2px solid #ccc;
  color: #555;
}
.rowpick svg { width: 18px; height: 9px; fill: none; stroke: #555; stroke-width: 1.6; }
.rows-label { margin-left: 8px; margin-bottom: 6px; }

/* table */
.table-wrap { position: relative; }
.batches {
  width: 2386px;
  table-layout: fixed;
  border-collapse: separate;
  border-spacing: 0;
}
.c-sel { width: 136px; }
.c-id { width: 199px; }
.c-date { width: 338px; }
.c-ref { width: 199px; }
.c-type { width: 445px; }
.c-src { width: 223px; }
.c-items { width: 172px; }
.c-amt { width: 231px; }
.c-status { width: 285px; }
.c-chart { width: 95px; }
.c-eye { width: 63px; }
.batches th {
  height: 76px;
  padding: 0;
  text-align: left;
  font-weight: 700;
  color: #003f72;
  border-bottom: 4px solid #ddd;
}
.batches td {
  height: 74px;
  padding: 0;
  border-bottom: 2px solid #e4e4e4;
}
.batches tbody tr:last-child td { border-bottom-color: transparent; }
.batches .num { text-align: right; }
.batches .st { padding-left: 33px; }
.pending td { background: #faf9c7; }
.batches a { color: #003f72; text-decoration: underline; }
.sel { display: flex; align-items: center; gap: 21px; padding-left: 25px; }
.check {
  display: block;
  width: 29px;
  height: 29px;
  background: #fff;
  border: 2.5px solid #333;
  border-radius: 6px;
}
.chev { width: 25px; height: 15px; margin-top: 5px; fill: none; stroke: #003f72; stroke-width: 5.5; }
.chart { display: block; width: 43px; height: 33px; margin-top: -1px; fill: #003f72; }
.eye { display: block; width: 37px; height: 24px; }
.eye .lid { fill: none; stroke: #003f72; stroke-width: 2.4; }
.eye .iris { fill: #003f72; }
.amount-mosaic {
  position: absolute;
  left: 1772px;
  top: 88px;
  width: 160px;
  height: 414px;
  z-index: 2;
}
```
